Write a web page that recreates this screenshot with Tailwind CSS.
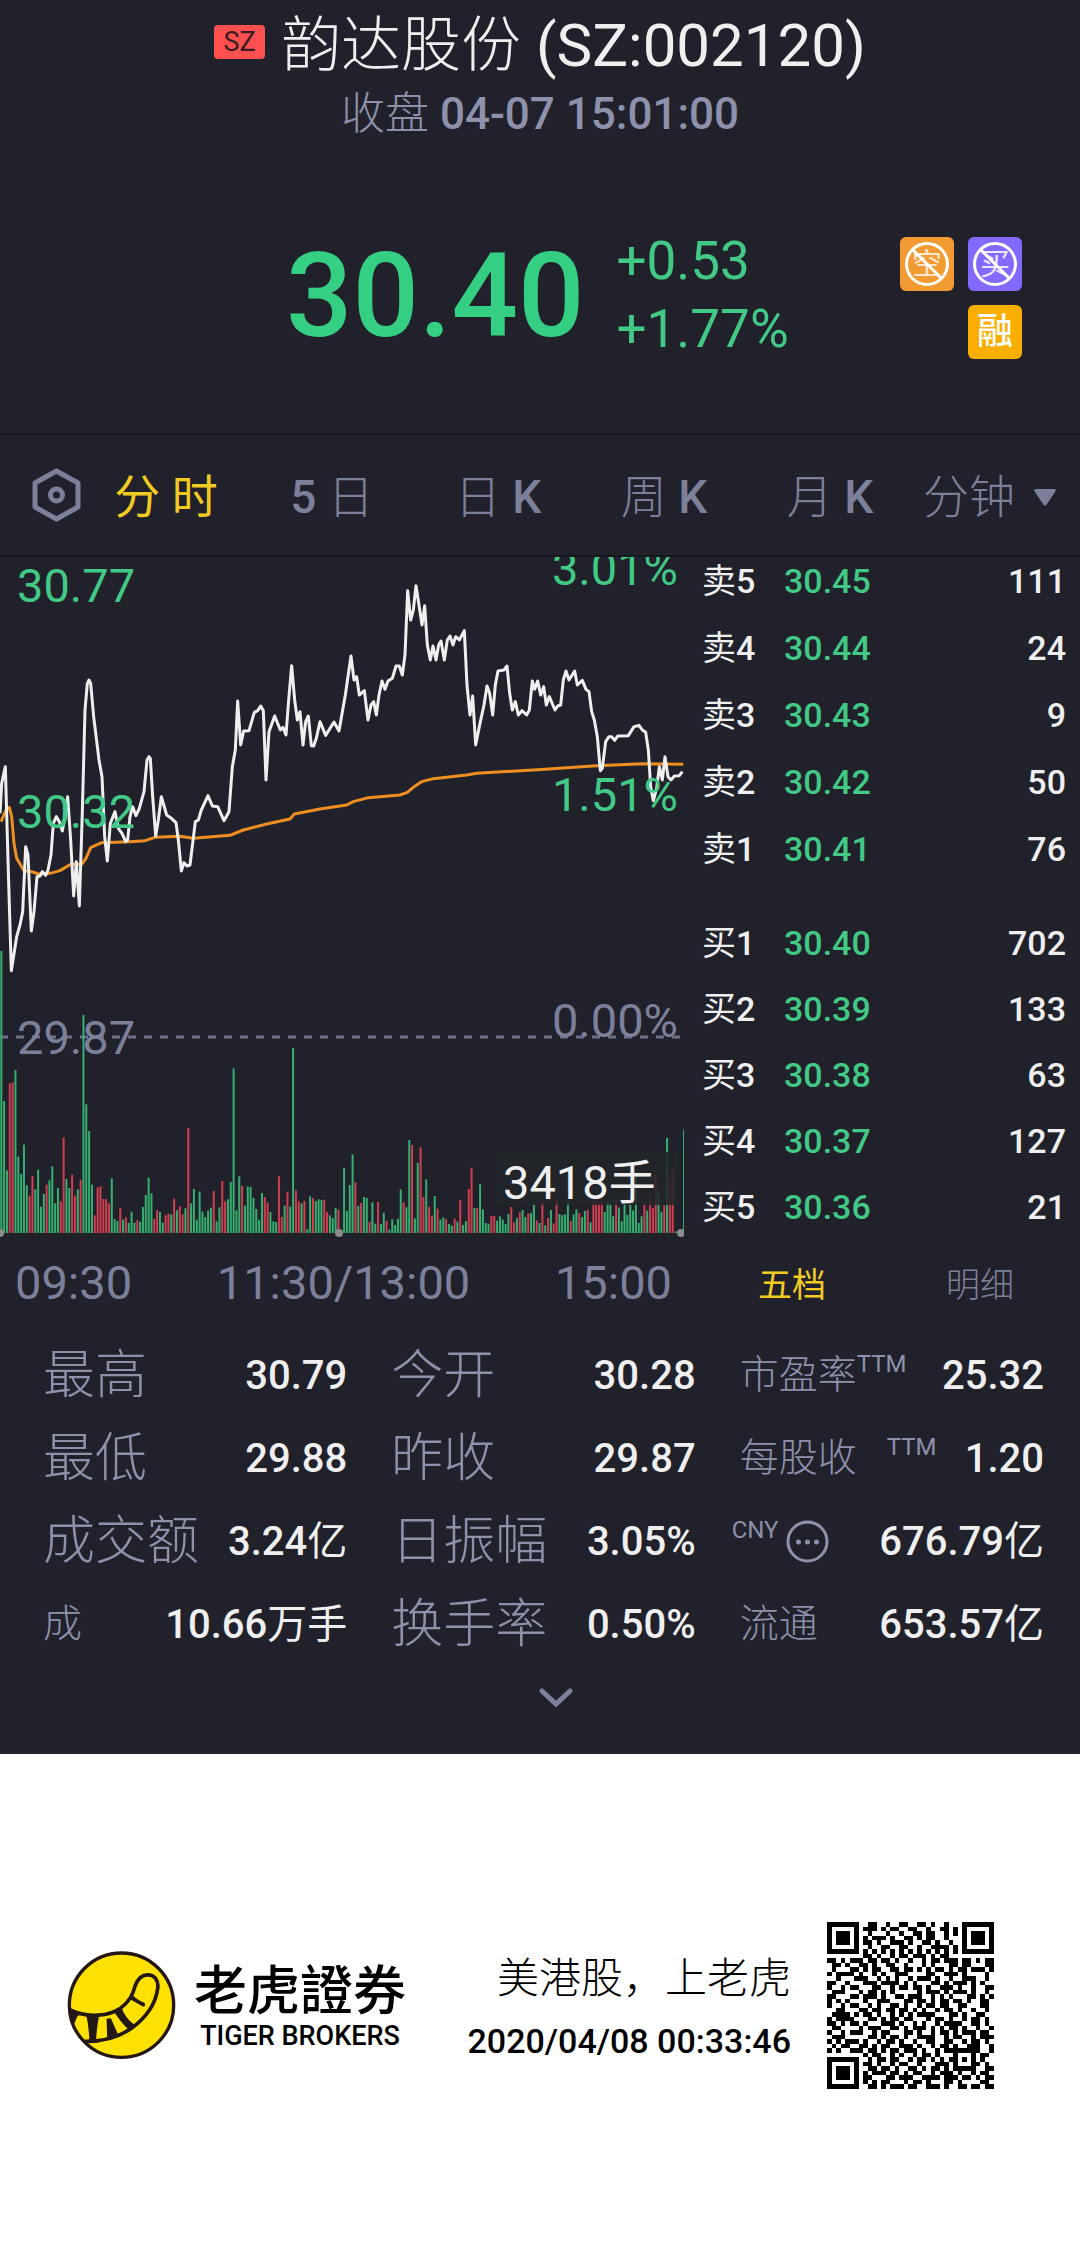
<!DOCTYPE html>
<html lang="zh-CN">
<head>
    <meta charset="UTF-8">
    <meta name="viewport" content="width=device-width, initial-scale=1.0">
    <title>韵达股份 (SZ:002120)</title>
    <script src="https://cdn.jsdelivr.net/npm/@tailwindcss/browser@4"></script>
</head>
<body class="bg-white font-['Roboto','Noto_Sans_CJK_SC',sans-serif]">
    <main class="bg-[#21212b] text-[#efefef] pb-[46px]">

        <!-- Header -->
        <header class="pt-4 text-center">
            <h1 class="flex items-center justify-center gap-4 text-[60px] leading-[60px]">
                <span class="bg-[#ff5050] text-[#3c1c24] rounded text-[27px] leading-[34px] w-[51px] -mt-2">SZ</span>
                <span><span class="font-light">韵达股份</span> (SZ:002120)</span>
            </h1>
            <p class="mt-4 text-[44px] leading-[44px] text-[#8d91ab]"><span class="font-light">收盘</span> <span class="font-medium">04-07 15:01:00</span></p>
        </header>

        <!-- Price -->
        <section class="flex items-start pt-[88px] pb-[65px] pl-[286px] pr-[58px] text-[#35cf83]">
            <strong class="text-[117px] leading-[144px] font-medium">30.40</strong>
            <div class="ml-8 mt-[3px] text-[53px] leading-[68px] text-[#41c985]">
                <p>+0.53</p>
                <p>+1.77%</p>
            </div>
            <div class="ml-auto mt-[13px] grid grid-cols-2 gap-[14px]">
                <svg class="size-[54px] rounded-md bg-[#f39b33]" viewBox="0 0 54 54" role="img" aria-label="不可卖空">
                    <text x="27" y="37" text-anchor="middle" font-size="30" fill="#fff" fill-opacity=".75">空</text>
                    <circle cx="27" cy="27" r="20.500" fill="none" stroke="#fff" stroke-width="3" />
                    <path d="M12 12 42 42" stroke="#fff" stroke-width="3" />
                </svg>
                <svg class="size-[54px] rounded-md bg-[#8468ff]" viewBox="0 0 54 54" role="img" aria-label="不可买">
                    <text x="27" y="37" text-anchor="middle" font-size="30" fill="#fff" fill-opacity=".85">买</text>
                    <circle cx="27" cy="27" r="20.500" fill="none" stroke="#fff" stroke-width="3" />
                    <path d="M12 12 42 42" stroke="#fff" stroke-width="3" />
                </svg>
                <span class="col-start-2 size-[54px] rounded-md bg-[#f9ae00] text-white text-[36px] leading-[54px] text-center font-medium">融</span>
            </div>
        </section>

        <!-- Period tabs -->
        <nav class="flex items-center h-[124px] border-y-2 border-[#191922] text-[46px] leading-[60px] text-[#7d809a]">
            <button class="w-[83px] pl-8" aria-label="设置">
                <svg class="w-[49px] h-[54px]" viewBox="0 0 49 54" fill="none" stroke="currentColor" stroke-width="5" stroke-linejoin="round">
                    <path d="M24.500 3 46 15V39L24.500 51 3 39V15Z" />
                    <circle cx="24.500" cy="27" r="6" />
                </svg>
            </button>
            <button class="flex-1 pt-1 text-[#f1cb22]">分 时</button>
            <button class="flex-1 pt-1"><span class="font-medium">5</span> <span class="font-light">日</span></button>
            <button class="flex-1 pt-1"><span class="font-light">日</span> <span class="font-medium">K</span></button>
            <button class="flex-1 pt-1"><span class="font-light">周</span> <span class="font-medium">K</span></button>
            <button class="flex-1 pt-1"><span class="font-light">月</span> <span class="font-medium">K</span></button>
            <button class="w-[167px] pt-1 pl-[10px] pr-6 flex items-center justify-between font-light">
                分钟
                <svg class="w-[22px] h-[17px]" viewBox="0 0 22 17" fill="currentColor"><path d="M2 0H20Q23 0 21 3L13 15Q11 18 9 15L1 3Q-1 0 2 0Z" /></svg>
            </button>
        </nav>

        <!-- Chart and order book -->
        <section class="grid grid-cols-[19fr_11fr]">
            <div>
                <svg class="block w-full" viewBox="0 0 684 684" role="img" aria-label="分时图">
                    <path d="M0 480H680" stroke="#6e7087" stroke-width="3" stroke-dasharray="8 8" />
                    <g id="volumeBars"></g>
                    <g transform="translate(0 -7) scale(.33333)" fill="none" stroke-width="9" stroke-linejoin="round">
                        <path stroke="#ef8f22" d="M3 815 18 780 28 772 35 800 42 880 50 925 72 962 95 965 115 972 150 970 180 962 212 943 245 943 258 925 272 893 305 878 390 875 435 872 465 862 540 859 580 865 690 856 730 840 800 822 870 807 883 792 960 777 1040 765 1060 755 1105 743 1200 735 1222 727 1240 712 1265 695 1300 686 1400 675 1430 670 1600 660 1790 647 1930 641 2050 643" />
                        <path stroke="#efefef" d="M0 790 5 700 16 650 25 965 34 1262 50 1160 60 1125 68 1085 77 890 84 915 94 1143 102 1085 111 980 120 978 127 965 137 976 144 960 153 915 160 820 169 800 178 815 187 843 195 800 203 740 212 870 221 1038 229 935 238 1068 247 785 255 480 262 400 267 390 272 400 281 500 297 630 306 680 314 860 322 933 331 820 345 785 355 835 366 850 377 875 383 870 390 800 398 770 408 797 418 775 432 725 441 630 447 620 451 625 458 740 467 858 475 810 484 740 500 795 514 805 528 818 535 870 544 963 552 938 561 948 570 945 578 880 586 815 595 810 604 780 624 737 637 768 653 770 672 812 687 785 697 650 706 600 713 453 722 585 731 543 747 542 763 487 773 482 782 468 790 482 798 690 807 545 824 498 841 540 849 532 858 555 866 450 875 347 884 450 892 510 900 485 909 585 917 515 925 498 934 587 941 588 949 565 960 515 977 556 1002 516 1017 543 1028 480 1036 435 1053 318 1062 390 1070 380 1078 435 1093 422 1104 510 1113 465 1121 455 1129 495 1137 435 1146 393 1155 418 1164 393 1177 385 1188 348 1198 348 1207 375 1215 315 1223 122 1232 210 1240 180 1248 107 1257 165 1266 225 1274 167 1282 285 1291 330 1299 288 1308 330 1316 285 1323 273 1333 330 1342 270 1350 258 1359 285 1367 260 1378 270 1393 242 1401 405 1410 495 1418 438 1427 585 1440 520 1452 465 1461 408 1469 430 1478 495 1486 405 1494 363 1512 360 1521 348 1529 430 1537 480 1546 455 1555 495 1566 482 1580 495 1588 480 1597 393 1604 418 1613 393 1622 435 1631 410 1639 465 1648 440 1665 480 1673 468 1682 465 1690 390 1698 363 1707 390 1724 363 1732 405 1747 391 1758 418 1767 425 1775 485 1783 510 1792 560 1801 662 1807 655 1817 575 1827 560 1835 560 1844 571 1853 558 1885 557 1902 530 1917 526 1927 540 1937 547 1945 600 1952 710 1960 752 1970 715 1978 650 1987 690 1995 620 2004 680 2013 690 2023 678 2038 677 2047 665" />
                    </g>
                    <rect x="497" y="595" width="181" height="53" fill="#212429" fill-opacity=".85" />
                    <g font-size="47" fill="#41c985">
                        <text x="17" y="45">30.77</text>
                        <text x="17" y="271">30.32</text>
                        <text x="678" y="28" text-anchor="end">3.01%</text>
                        <text x="678" y="254" text-anchor="end">1.51%</text>
                        <g fill="#7d809a">
                            <text x="17" y="497">29.87</text>
                            <text x="678" y="480" text-anchor="end">0.00%</text>
                        </g>
                        <text x="503" y="642" fill="#efefef">3418手</text>
                    </g>
                    <g fill="#8c8c8c">
                        <circle cx="0" cy="676" r="4" />
                        <circle cx="339" cy="676" r="4" />
                        <circle cx="681" cy="676" r="4" />
                    </g>
                </svg>
                <div class="flex items-center justify-between h-[84px] pl-[15px] pr-3 text-[47px] text-[#7d809a]">
                    <span>09:30</span>
                    <span>11:30/13:00</span>
                    <span>15:00</span>
                </div>
            </div>

            <div class="flex flex-col">
                <table class="w-full text-[34px]">
                    <tbody id="sellRows"></tbody>
                    <tbody id="buyRows" class="before:block before:h-[27px]"></tbody>
                </table>
                <div class="mt-auto grid grid-cols-2 h-[76px] pb-1 pl-[14px] pr-[6px] text-[34px] text-[#7d809a]">
                    <button class="text-[#f1cb22]">五档</button>
                    <button class="font-light">明细</button>
                </div>
            </div>
        </section>

        <!-- Key figures -->
        <dl class="grid grid-cols-3 gap-x-11 mt-[9px] pl-[43px] pr-9 text-[40px] font-medium [&_dt]:font-light [&_dt]:text-[#8d91ab] [&>div]:flex [&>div]:h-[83px] [&>div]:items-center [&>div]:justify-between">
            <div><dt class="text-[52px]">最高</dt><dd>30.79</dd></div>
            <div><dt class="text-[52px]">今开</dt><dd>30.28</dd></div>
            <div><dt class="flex text-[39px]">市盈率<span class="text-[24px] leading-9 font-normal">TTM</span></dt><dd>25.32</dd></div>
            <div><dt class="text-[52px]">最低</dt><dd>29.88</dd></div>
            <div><dt class="text-[52px]">昨收</dt><dd>29.87</dd></div>
            <div><dt class="flex gap-[30px] text-[39px]">每股收<span class="text-[24px] leading-9 font-normal">TTM</span></dt><dd>1.20</dd></div>
            <div><dt class="text-[52px]">成交额</dt><dd>3.24<span class="font-normal">亿</span></dd></div>
            <div><dt class="text-[52px]">日振幅</dt><dd>3.05%</dd></div>
            <div>
                <dt class="flex items-center gap-2 -ml-2 text-[24px]">
                    <span class="font-normal -mt-6">CNY</span>
                    <svg class="size-[43px]" viewBox="0 0 43 43" fill="currentColor">
                        <circle cx="21.500" cy="21.500" r="19.500" fill="none" stroke="currentColor" stroke-width="3" />
                        <circle cx="12.500" cy="22" r="2.500" /><circle cx="21.500" cy="22" r="2.500" /><circle cx="30.500" cy="22" r="2.500" />
                    </svg>
                </dt>
                <dd>676.79<span class="font-normal">亿</span></dd>
            </div>
            <div><dt class="text-[39px]">成</dt><dd>10.66<span class="font-normal">万手</span></dd></div>
            <div><dt class="text-[52px]">换手率</dt><dd>0.50%</dd></div>
            <div><dt class="text-[39px]">流通</dt><dd>653.57<span class="font-normal">亿</span></dd></div>
        </dl>
        <button class="block mx-auto mt-[22px] pl-8 text-[#7d809a]" aria-label="展开">
            <svg class="w-[34px] h-5" viewBox="0 0 34 20" fill="none" stroke="currentColor" stroke-width="5" stroke-linecap="round"><path d="M3 3 17 16 31 3" /></svg>
        </button>
    </main>

    <!-- Share footer -->
    <footer class="flex items-center pt-[168px] pb-[168px] pl-[67px] pr-[86px] text-black">
        <svg class="size-[109px] shrink-0" viewBox="51 60 328 328" role="img" aria-label="老虎证券">
            <circle cx="215" cy="223" r="157" fill="#ffe100" stroke="#231815" stroke-width="10" />
            <g fill="none" stroke="#231815" stroke-width="11">
                <path d="M62 239C120 262 176 256 212 232C240 212 249 190 256 165C265 140 278 132 294 132C316 132 327 150 324 172C318 220 286 262 246 292C206 320 160 333 104 332" />
            </g>
            <path fill="#231815" d="M58 230 96 248 82 257 70 286ZM108 248 148 252Q140 290 138 336L118 332Q118 290 108 248ZM170 264 183 262 205 312 172 324ZM191 240 214 226Q224 260 254 282L236 296Q212 275 191 240ZM238 204 246 190Q262 208 284 216Q290 226 280 228Q260 216 238 204Z" />
        </svg>
        <div class="ml-[18px] pt-1 text-center font-medium">
            <p class="text-[53px] leading-[56px]">老虎證券</p>
            <p class="text-[27px] leading-8">TIGER BROKERS</p>
        </div>
        <div class="ml-auto pt-2 text-right">
            <p class="text-[42px] leading-[62px] font-light">美港股，上老虎</p>
            <p class="text-[34px] leading-[62px] font-medium">2020/04/08 00:33:46</p>
        </div>
        <svg id="qrCode" class="ml-9 size-[167px] shrink-0" viewBox="0 0 37 37" shape-rendering="crispEdges" role="img" aria-label="二维码"></svg>
    </footer>

    <script>
        const SVG_NS = 'http://www.w3.org/2000/svg';

        function addRect(parent, x, y, width, height, fill) {
            const rect = document.createElementNS(SVG_NS, 'rect');
            Object.entries({ x, y, width, height, fill }).forEach(([key, value]) => rect.setAttribute(key, value));
            parent.appendChild(rect);
        }

        // One bar a minute, negative values are drawn red
        const volumes = [
            846, 396, 188, -449, -452, 489, 229, 177, 265, 143, -112, -171, 131, 190, 79, 117, -145, 158, 200, 89,
            135, -95, -286, 162, 135, -175, -112, 131, -160, 654, 386, 306, 145, -53, -137, -140, -102, -102, -89, 164,
            42, 36, -75, 40, -47, 30, 64, 31, -38, 34, 78, 114, 166, 119, -42, -68, 63, 31, -53, -58,
            56, -103, 68, -80, -56, 74, -315, 89, 132, 40, 124, 64, 48, 67, 76, -126, 35, 77, -156, -95,
            101, 153, 494, 68, 170, -141, 82, 139, 138, 105, 72, 40, 120, -108, -91, 63, 35, 33, -170, -48,
            82, -124, 79, 555, -128, -95, 89, -96, 12, 110, -105, 96, 101, 99, -100, -63, 53, 45, 75, -70,
            5, 195, 66, 144, 236, -152, 81, -90, 108, 105, -33, 92, 28, -93, 27, 61, -36, 10, 41, 24,
            42, 131, -92, 77, 279, -264, 44, 210, -257, -108, 161, -79, -52, 111, -73, 40, 47, -42, 27, 22,
            -43, 34, -99, 24, 36, -132, -196, 75, -74, 146, 71, 30, 28, -51, -51, 37, 50, 40, 27, 57,
            -78, -32, 44, -62, 69, 48, -59, 60, 86, -38, 30, -102, 23, -45, 69, -29, -101, 57, 54, 56,
            99, -36, 56, 71, -60, 48, 66, -70, 32, -99, -94, -92, -114, 63, 95, 89, 50, -101, 76, 35,
            89, 54, 89, 68, 182, 30, 50, -86, 67, -117, -75, -176, 127, 64, -83, 285, -165, -193, 5, 0, 0, 310
        ];
        const bars = document.getElementById('volumeBars');
        volumes.forEach((v, i) => {
            const height = Math.abs(v) / 3;
            addRect(bars, i * 2.833 + 0.3, 676 - height, 2, height, v < 0 ? '#d03f4f' : '#35b071');
        });

        // Order book
        const sells = [['卖', 5, '30.45', 111], ['卖', 4, '30.44', 24], ['卖', 3, '30.43', 9], ['卖', 2, '30.42', 50], ['卖', 1, '30.41', 76]];
        const buys = [['买', 1, '30.40', 702], ['买', 2, '30.39', 133], ['买', 3, '30.38', 63], ['买', 4, '30.37', 127], ['买', 5, '30.36', 21]];
        const row = (height) => ([side, level, price, size]) => `
            <tr class="${height} align-top leading-[48px]">
                <th class="w-[100px] pl-[18px] text-left font-medium"><span class="font-normal">${side}</span>${level}</th>
                <td class="font-medium text-[#41c985]">${price}</td>
                <td class="pr-[14px] text-right font-medium">${size}</td>
            </tr>`;
        document.getElementById('sellRows').innerHTML = sells.map(row('h-[67px]')).join('');
        document.getElementById('buyRows').innerHTML = buys.map(row('h-[66px]')).join('');

        // QR code, one string a row
        const qrRows = [
            '1111111001100100110011010010001111111',
            '1000001011101011001100100110101000001',
            '1011101001000100100110110010101011101',
            '1011101010111010011010110010001011101',
            '1011101011010011101001101001001011101',
            '1000001001001100110010011110101000001',
            '1111111010101010101010101010101111111',
            '0000000011010010110111010110000000000',
            '1101011101101101001001011011101101011',
            '0110100110100110010001010001101100011',
            '0100011010110011011010101101011011101',
            '1011110100101001110000110011101000010',
            '0010001110010101001011101001001110010',
            '1100100011101111010100011010111010100',
            '1001011000110010110110100111010010011',
            '0111000101101010000010111010111010010',
            '1100011011101001101110010101000110101',
            '1010100010011100011011010110110100110',
            '1001011001010011010010110110011000110',
            '0011000110110110110101001011010010010',
            '0111101011010010101011110001101001100',
            '1011110001101011011000101101001011010',
            '1101011010001110100101001011110011010',
            '0110000101110011010111010101101001001',
            '1001011100101100011010010110101110110',
            '0111000001101011010011110010110010111',
            '1010111010010110100100110011001011010',
            '0101100110101100111010010110100111001',
            '1010011101101011011101001011111111001',
            '0000000010110010100101101000100010110',
            '1111111001011011001011010101101010100',
            '1000001011010010110010001110100011010',
            '1011101001101101001101011010111110011',
            '1011101010111011010110010111010010110',
            '1011101011000110111001111011101101011',
            '1000001010101100010110100011010000110',
            '1111111001101011101100111010011011011'
        ];
        const qr = document.getElementById('qrCode');
        qrRows.forEach((line, y) => [...line].forEach((cell, x) => {
            if (cell === '1') addRect(qr, x, y, 1, 1, '#000');
        }));
    </script>
</body>
</html>
